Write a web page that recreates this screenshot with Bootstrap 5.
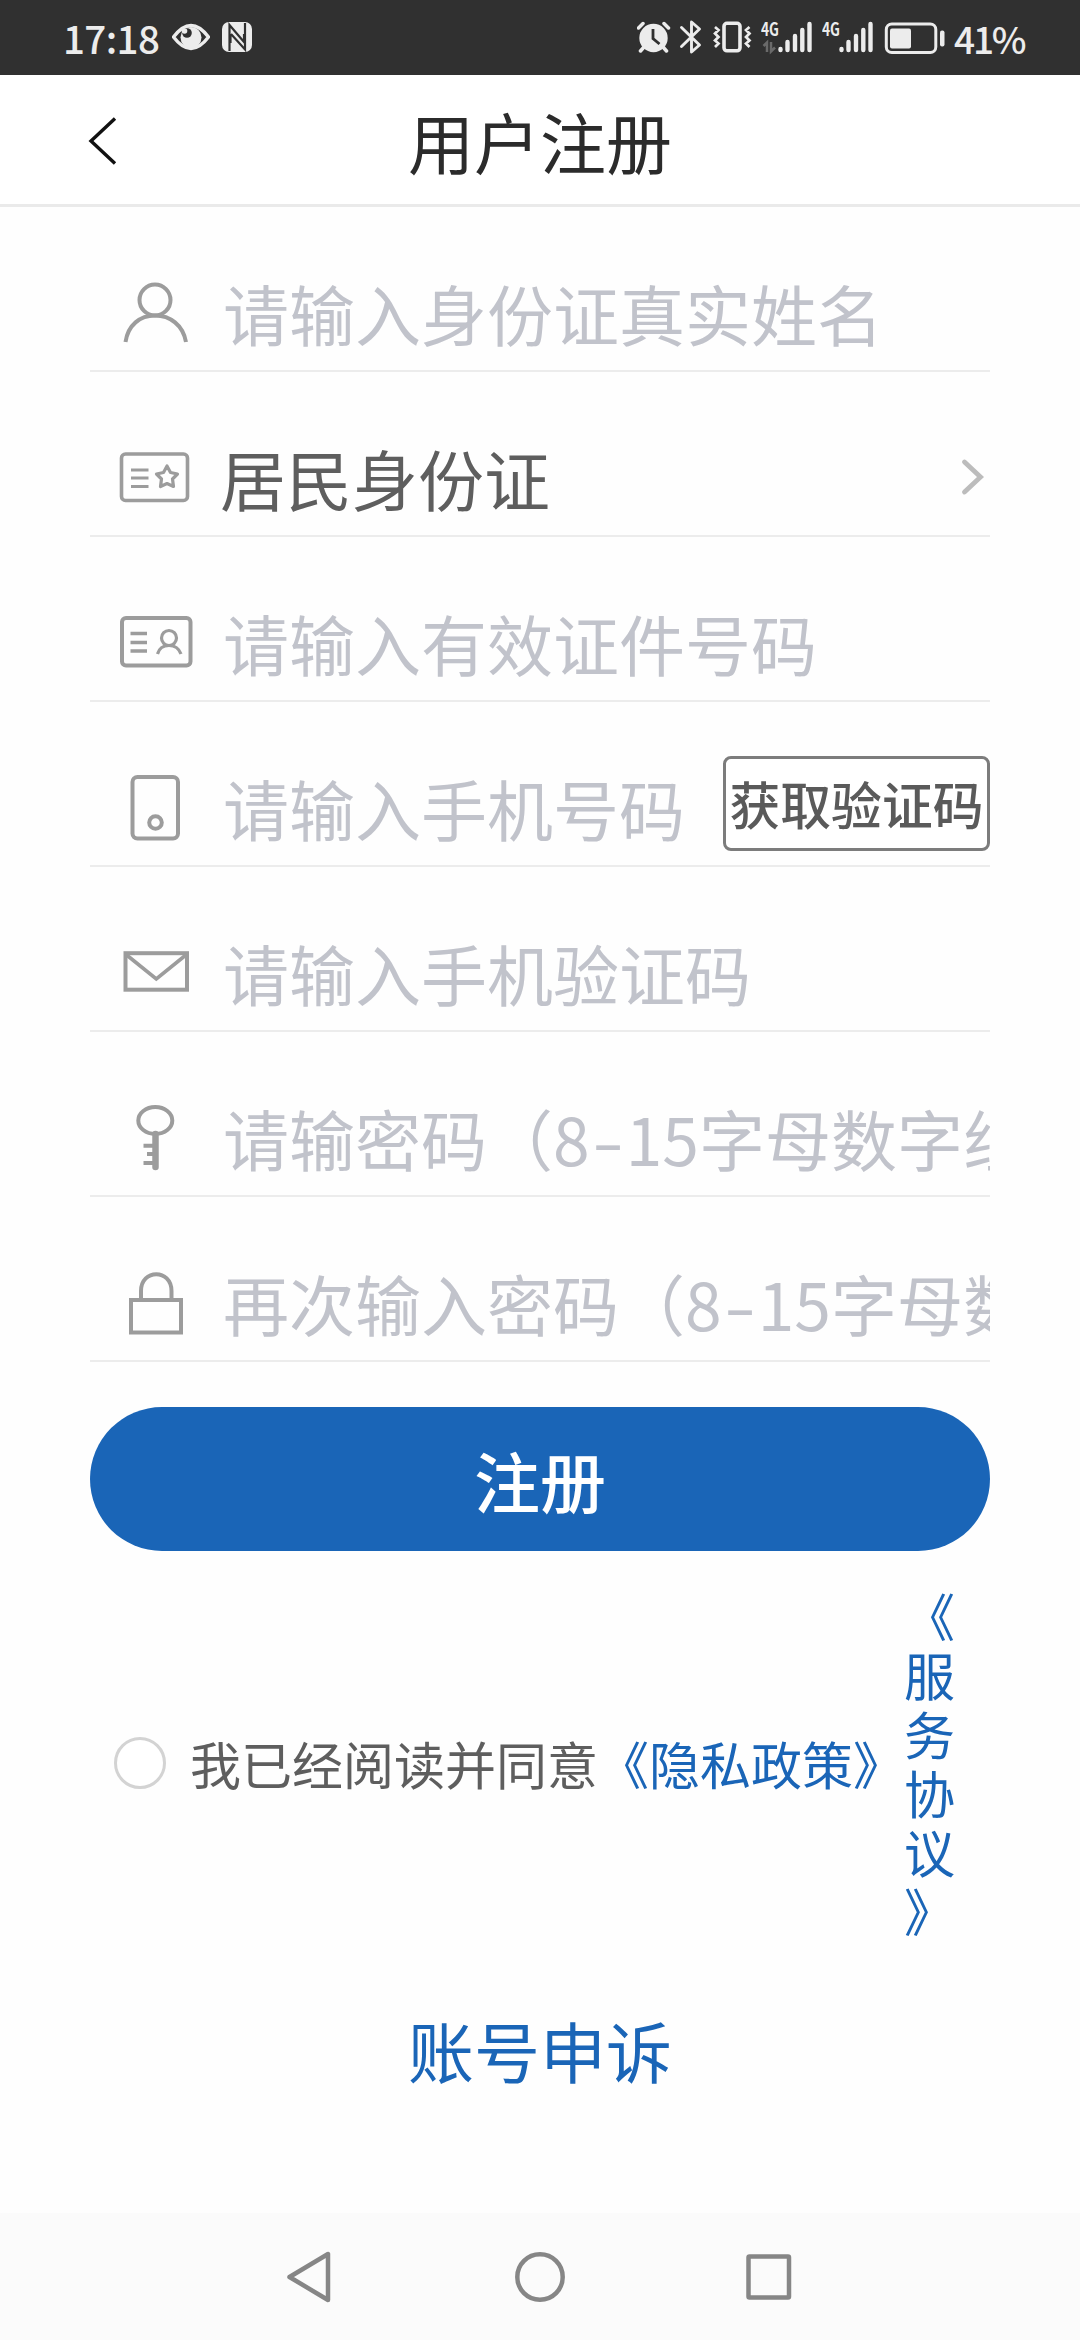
<!DOCTYPE html>
<html lang="zh-CN">
<head>
<meta charset="utf-8">
<meta name="viewport" content="width=device-width, initial-scale=1">
<title>用户注册</title>
<link rel="stylesheet" href="https://cdn.jsdelivr.net/npm/bootstrap@5.3.0/dist/css/bootstrap.min.css">
<style>
  body { font-family: "Noto Sans CJK SC", sans-serif; background: #fefefe; color: #5e5e5e; text-spacing-trim: space-all; }
  svg { display: block; flex: none; }
  .screen { width: 1080px; height: 2340px; overflow: hidden; }
  .status-bar { height: 75px; background: #303030; color: #ececec; font-size: 38.5px; font-weight: 500; line-height: 75px; }
  .status-bar svg { fill: #ececec; }
  .time-text { margin-left: 63px; width: 109px; letter-spacing: -.6px; }
  .nfc-icon { margin-left: 12px; }
  .vibrate-icon, .signal-one { margin-left: 9px; }
  .signal-two { margin-left: 10px; }
  .battery-icon { margin-left: 11px; }
  .battery-text { margin-left: 8px; width: 126px; font-size: 37px; letter-spacing: -2.2px; padding-top: 1px; }
  .title-bar { height: 132px; border-bottom: 3px solid #eaeaea; background: #fff; }
  .title-bar h1 { font-size: 66px; font-weight: 400; line-height: 96px; color: #2b2b2b; padding-top: 1px; }
  .side-slot { width: 200px; }
  .form-area { padding: 0 90px; }
  .field { height: 165px; border-bottom: 2px solid #ececec; }
  .field-icon { fill: none; stroke: #9c9c9c; stroke-width: 4; }
  .field-text { font-size: 66px; line-height: 96px; padding: 47px 0 0 2px; color: #c1c3cb; min-width: 0; }
  .field-text.chosen { padding-left: 0; margin-left: -1px; color: #5e5e5e; }
  .dash { display: inline-block; width: 36px; text-align: center; transform: scaleX(1.4); }
  .code-btn { width: 267px; height: 95px; margin-top: 40px; padding: 0; border: 3px solid #7c7c7c; border-radius: 8px; font-size: 50.8px; font-weight: 500; line-height: 87px; color: #5a5a5a; background: #fff; white-space: nowrap; }
  .submit-btn { height: 144px; margin-top: 45px; padding: 0; border: 0; font-size: 66px; font-weight: 500; line-height: 144px; background: #1a65b7; color: #fff; }
  .agree { margin-top: 35px; height: 354px; font-size: 51px; line-height: 59px; padding-left: 24px; }
  .agree-check { width: 52px; height: 52px; border: 3px solid #d3d3d3; margin: 0 24px 0 0; background: #fff; flex: none; }
  .blue { color: #1a65b7; text-decoration: none; }
  .vertical-link { width: 51px; word-break: break-all; line-break: anywhere; }
  .appeal { font-size: 66px; line-height: 96px; margin-top: 61px; }
  .nav-keys { height: 127px; background: #fbfbfb; }
  .nav-keys svg { fill: none; stroke: #868686; stroke-width: 4.5; stroke-linejoin: round; }
</style>
<script src="https://cdn.jsdelivr.net/npm/bootstrap@5.3.0/dist/js/bootstrap.bundle.min.js"></script>
</head>
<body>
<div class="screen d-flex flex-column">

  <div class="status-bar d-flex flex-shrink-0">
    <span class="time-text">17:18</span>
    <svg width="38" height="75" viewBox="172 0 38 75">
      <path d="M173.500 37Q191 14 208.500 37Q191 60 173.500 37Z" fill="none" stroke="#ececec" stroke-width="3.400"/>
      <circle cx="191" cy="37.500" r="10.500"/><circle cx="187" cy="33" r="4.800" fill="#303030"/><circle cx="184.500" cy="31" r="2.800"/>
    </svg>
    <svg class="nfc-icon" width="30" height="75" viewBox="222 0 30 75">
      <rect x="222" y="22" width="30" height="30" rx="7"/>
      <path d="M229.500 51V25L244 42V34M230.500 34V43M245 23V49.500L231 34" fill="none" stroke="#303030" stroke-width="2.200"/>
    </svg>
    <svg class="ms-auto" width="34" height="75" viewBox="637 0 34 75">
      <circle cx="653.500" cy="38" r="14.200"/>
      <path d="M638.500 28L643 23.500M668.500 28L664 23.500M644 47L640.500 51M663 47L666.500 51" stroke="#ececec" stroke-width="3.500" stroke-linecap="round"/>
      <path d="M653 29V38.500L659.500 44" fill="none" stroke="#303030" stroke-width="2.800"/>
    </svg>
    <svg class="ms-2" width="24" height="75" viewBox="679 0 24 75">
      <path d="M681.500 27.500L699.500 45L691.500 52V22L699.500 29L681.500 46.500" fill="none" stroke="#ececec" stroke-width="2.900" stroke-linejoin="round" stroke-linecap="round"/>
    </svg>
    <svg class="vibrate-icon" width="40" height="75" viewBox="712 0 40 75">
      <rect x="724" y="23.300" width="16" height="27.500" rx="3" fill="none" stroke="#ececec" stroke-width="3.600"/>
      <path d="M715 27L718.500 30L715 33.500L718.500 37L715 40.500L718.500 43.500L715 47M749.500 27L746 30L749.500 33.500L746 37L749.500 40.500L746 43.500L749.500 47" fill="none" stroke="#ececec" stroke-width="2.700"/>
    </svg>
    <svg class="signal-one" width="51" height="75" viewBox="761 0 51 75">
      <text x="761" y="36" font-size="18" font-weight="700" letter-spacing="0" textLength="18" lengthAdjust="spacingAndGlyphs">4G</text>
      <path d="M780.500 49V50M787.500 42V50M795 36V50M802.300 30V50M809.500 24V50" stroke="#ececec" stroke-width="4.400" stroke-linecap="round"/>
      <path d="M763.500 46L767 42.500V52M771 42V51.500L775 47.500" fill="none" stroke="#6a6a6a" stroke-width="2.500"/>
    </svg>
    <svg class="signal-two" width="51" height="75" viewBox="822 0 51 75">
      <text x="822" y="36" font-size="18" font-weight="700" letter-spacing="0" textLength="18" lengthAdjust="spacingAndGlyphs">4G</text>
      <path d="M841.500 49V50M848.500 42V50M856 36V50M863.300 30V50M870.500 24V50" stroke="#ececec" stroke-width="4.400" stroke-linecap="round"/>
    </svg>
    <svg class="battery-icon" width="62" height="75" viewBox="884 0 62 75">
      <rect x="886.300" y="24" width="49.500" height="28.500" rx="5.500" fill="none" stroke="#ececec" stroke-width="3"/>
      <rect x="890" y="28.500" width="21" height="20" rx="2"/>
      <rect x="940" y="30.500" width="4.500" height="16" rx="2"/>
    </svg>
    <span class="battery-text">41%</span>
  </div>

  <header class="title-bar d-flex align-items-center flex-shrink-0">
    <div class="side-slot">
      <svg width="130" height="129" viewBox="0 75 130 129"><path d="M115 118.500L91 141L115 163.500" fill="none" stroke="#111" stroke-width="3.400"/></svg>
    </div>
    <h1 class="flex-grow-1 text-center mb-0">用户注册</h1>
    <div class="side-slot"></div>
  </header>

  <main class="form-area d-flex flex-column flex-grow-1">
    <div class="field d-flex align-items-center flex-shrink-0">
      <svg class="field-icon" width="131" height="163" viewBox="90 207 131 163"><ellipse cx="155" cy="300" rx="15.500" ry="15.500"/><path d="M125.500 342C128 325 140 315.500 155 315.500S183 325 186 342"/></svg>
      <div class="field-text flex-grow-1 text-nowrap overflow-hidden">请输入身份证真实姓名</div>
    </div>
    <div class="field d-flex align-items-center flex-shrink-0">
      <svg class="field-icon" width="131" height="163" viewBox="90 372 131 163"><rect x="121.500" y="454" width="66" height="46.500" rx="4" stroke-width="3.600"/><path d="M131 470H148.500M131 478H148.500M131 486.500H148.500" stroke-width="3.200"/><path d="M167 466L170.500 472.500L177.500 474L172.500 479L173.500 486.500L167 483.500L160.500 486.500L161.500 479L156.500 474L163.500 472.500Z" stroke-width="3.200" stroke-linejoin="round"/></svg>
      <div class="field-text chosen flex-grow-1 text-nowrap">居民身份证</div>
      <svg width="30" height="163" viewBox="960 372 30 163"><path d="M964.500 462L980.500 477L964.500 492" fill="none" stroke="#bcbcbc" stroke-width="4.800" stroke-linecap="round"/></svg>
    </div>
    <div class="field d-flex align-items-center flex-shrink-0">
      <svg class="field-icon" width="131" height="163" viewBox="90 537 131 163"><rect x="122" y="618" width="68.500" height="47.500" rx="4"/><path d="M130.500 633.500H147M130.500 642.500H147M130.500 651H147" stroke-width="3.500"/><circle cx="169" cy="638" r="7.500" stroke-width="3.200"/><path d="M157.500 654C159 648.500 163 645.500 169 645.500S179 648.500 181 654" stroke-width="3.200"/></svg>
      <div class="field-text flex-grow-1 text-nowrap overflow-hidden">请输入有效证件号码</div>
    </div>
    <div class="field d-flex align-items-center flex-shrink-0">
      <svg class="field-icon" width="131" height="163" viewBox="90 702 131 163"><rect x="132.500" y="777" width="45.500" height="61.500" rx="5"/><circle cx="155.500" cy="822.500" r="6.300"/></svg>
      <div class="field-text flex-grow-1 text-nowrap overflow-hidden">请输入手机号码</div>
      <button type="button" class="btn code-btn">获取验证码</button>
    </div>
    <div class="field d-flex align-items-center flex-shrink-0">
      <svg class="field-icon" width="131" height="163" viewBox="90 867 131 163"><rect x="125.500" y="953.200" width="61.500" height="36.500"/><path d="M126 954.500L156.300 979L186.500 954.500" stroke-width="3.600"/></svg>
      <div class="field-text flex-grow-1 text-nowrap overflow-hidden">请输入手机验证码</div>
    </div>
    <div class="field d-flex align-items-center flex-shrink-0">
      <svg class="field-icon" width="131" height="163" viewBox="90 1032 131 163"><ellipse cx="155.300" cy="1120.500" rx="17" ry="13.500"/><path d="M155.500 1134V1167" stroke-width="6.500" stroke-linecap="round"/><path d="M143.500 1145.700H154M147 1154H154M143.500 1163H154"/></svg>
      <div class="field-text flex-grow-1 text-nowrap overflow-hidden">请输密码（8<span class="dash">-</span>15字母数字组合）</div>
    </div>
    <div class="field d-flex align-items-center flex-shrink-0">
      <svg class="field-icon" width="131" height="163" viewBox="90 1197 131 163"><rect x="131" y="1300" width="50" height="32.500"/><path d="M141 1300V1291C141 1268.500 171.500 1268.500 171.500 1291V1300"/></svg>
      <div class="field-text flex-grow-1 text-nowrap overflow-hidden">再次输入密码（8<span class="dash">-</span>15字母数字组合）</div>
    </div>

    <button type="button" class="btn submit-btn w-100 rounded-pill flex-shrink-0">注册</button>

    <div class="agree d-flex align-items-center flex-shrink-0">
      <input type="radio" class="form-check-input agree-check" aria-label="同意">
      <span class="text-nowrap">我已经阅读并同意</span><a class="blue text-nowrap" href="#">《隐私政策》</a><a class="blue vertical-link" href="#">《服务协议》</a>
    </div>

    <a class="blue appeal text-center" href="#">账号申诉</a>
  </main>

  <nav class="nav-keys d-flex flex-shrink-0">
    <svg width="1080" height="127" viewBox="0 2213 1080 127"><path d="M289.500 2277L328 2254V2300Z"/><circle cx="540" cy="2277" r="22.700"/><rect x="748.500" y="2256.500" width="40.500" height="41" rx="1"/></svg>
  </nav>
</div>
</body>
</html>
